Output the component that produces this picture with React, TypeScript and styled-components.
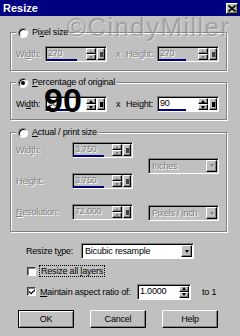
import * as React from 'react'
import styled, { createGlobalStyle, css } from 'styled-components'

const GlobalStyle = createGlobalStyle`
    * {
        box-sizing: border-box;
    }
    html,
    body {
        margin: 0;
        padding: 0;
        background: #c0c0c0;
    }
    body {
        font-family: 'Liberation Sans', Arial, sans-serif;
        font-size: 9px;
        letter-spacing: -0.2px;
        color: #000;
    }
`

const raised = css`
    background: #c0c0c0;
    border: 1px solid;
    border-color: #fff #000 #000 #fff;
    box-shadow: inset -1px -1px 0 #808080;
`

const sunken = css`
    border: 1px solid;
    border-color: #808080 #fff #fff #808080;
    box-shadow: inset 1px 1px 0 #000;
`

const etched = css`
    color: #808080;
    text-shadow: 1px 1px 0 #fff;
`

type SpinFieldProps = {
    value: string
    width: number
    disabled?: boolean
    bar?: number
    square?: boolean
    children?: React.ReactNode
}

const SpinField = ({ value, width, disabled, bar, square = true, children }: SpinFieldProps) => (
    <FieldBox $w={width} $disabled={disabled}>
        <ValueArea $disabled={disabled}>
            <ValueText>{value}</ValueText>
            {bar !== undefined && <Bar $pct={bar} />}
        </ValueArea>
        <Spinner>
            <SpinButton>
                <Arrow $dir="up" $disabled={disabled} />
            </SpinButton>
            <SpinButton>
                <Arrow $dir="down" $disabled={disabled} />
            </SpinButton>
        </Spinner>
        {square && (
            <SquareButton>
                <SquareMark $disabled={disabled} />
            </SquareButton>
        )}
        {children}
    </FieldBox>
)

const Dropdown = ({ text, width, disabled }: { text: string; width: number; disabled?: boolean }) => (
    <Select $w={width} $disabled={disabled}>
        <SelectText $disabled={disabled}>{text}</SelectText>
        <ArrowButton>
            <Arrow $dir="down" $disabled={disabled} />
        </ArrowButton>
    </Select>
)

export default function App() {
    return (
        <>
            <GlobalStyle />
            <Window>
                <TitleBar>
                    <Title>Resize</Title>
                    <CloseButton>
                        <svg width="8" height="7" viewBox="0 0 8 7">
                            <path d="M0.5 0.5 L7.5 6.5 M7.5 0.5 L0.5 6.5" stroke="#000" strokeWidth="1.6" />
                        </svg>
                    </CloseButton>
                </TitleBar>
                <Body>
                    <Watermark>©CindyMiller</Watermark>

                    <Group $pad="8px 5px 8px" $top={0}>
                        <Legend>
                            <Radio />
                            <LegendText>
                                Pi<Key>x</Key>el size
                            </LegendText>
                        </Legend>
                        <PairRow>
                            <FieldLabel $w={29} $disabled>
                                Wi<Key>d</Key>th:
                            </FieldLabel>
                            <SpinField value="270" width={62} disabled bar={76} />
                            <Times $disabled>x</Times>
                            <FieldLabel $w={31} $disabled>
                                Hei<Key>g</Key>ht:
                            </FieldLabel>
                            <SpinField value="270" width={62} disabled bar={70} />
                        </PairRow>
                    </Group>

                    <Group $pad="8px 5px 7px" $top={6}>
                        <Legend>
                            <Radio $checked />
                            <LegendText>
                                <Key>P</Key>ercentage of original
                            </LegendText>
                        </Legend>
                        <PairRow>
                            <FieldLabel $w={29}>
                                Wi<Key>d</Key>th:
                            </FieldLabel>
                            <SpinField value="90" width={62} bar={70}>
                                <BigNumber>90</BigNumber>
                            </SpinField>
                            <Times>x</Times>
                            <FieldLabel $w={31}>
                                Hei<Key>g</Key>ht:
                            </FieldLabel>
                            <SpinField value="90" width={62} bar={70} />
                        </PairRow>
                    </Group>

                    <Group $pad="4px 5px 11px" $top={7}>
                        <Legend>
                            <Radio />
                            <LegendText>
                                <Key>A</Key>ctual / print size
                            </LegendText>
                        </Legend>
                        <SizeGrid>
                            <FieldLabel $w={56} $disabled>
                                Wid<Key>t</Key>h:
                            </FieldLabel>
                            <SpinField value="3.750" width={61} disabled bar={80} />
                            <UnitSlot $row="1 / span 2">
                                <Dropdown text="Inches" width={71} disabled />
                            </UnitSlot>
                            <FieldLabel $w={56} $disabled>
                                Hei<Key>g</Key>ht:
                            </FieldLabel>
                            <SpinField value="3.750" width={61} disabled bar={80} />
                            <FieldLabel $w={56} $disabled>
                                <Key>R</Key>esolution:
                            </FieldLabel>
                            <SpinField value="72.000" width={61} disabled bar={0} />
                            <UnitSlot $row="3" $shift={2}>
                                <Dropdown text="Pixels / inch" width={71} disabled />
                            </UnitSlot>
                        </SizeGrid>
                    </Group>

                    <TypeRow>
                        <FieldLabel $w={55}>
                            Resize t<Key>y</Key>pe:
                        </FieldLabel>
                        <Dropdown text="Bicubic resample" width={113} />
                    </TypeRow>

                    <CheckRow $top={6} $h={12}>
                        <CheckBox />
                        <CheckLabel $focus>
                            Resize all <Key>l</Key>ayers
                        </CheckLabel>
                    </CheckRow>

                    <CheckRow $top={7} $h={15}>
                        <CheckBox>
                            <svg width="7" height="7" viewBox="0 0 7 7">
                                <path d="M0 2.5 L2.5 5 L7 0.5 L7 2.5 L2.5 7 L0 4.5 Z" fill="#000" />
                            </svg>
                        </CheckBox>
                        <CheckLabel $w={97}>
                            <Key>M</Key>aintain aspect ratio of:
                        </CheckLabel>
                        <SpinField value="1.0000" width={54} square={false} />
                        <Suffix>to 1</Suffix>
                    </CheckRow>

                    <ButtonRow>
                        <PushButton $default>OK</PushButton>
                        <PushButton>Cancel</PushButton>
                        <PushButton>Help</PushButton>
                    </ButtonRow>
                </Body>
            </Window>
        </>
    )
}

const Window = styled.div`
    width: 240px;
    height: 336px;
    overflow: hidden;
    display: flex;
    flex-direction: column;
    background: #c0c0c0;
`

const TitleBar = styled.div`
    height: 16px;
    flex-shrink: 0;
    display: flex;
    align-items: center;
    justify-content: space-between;
    padding: 0 2px 0 3px;
    background: #000080;
`

const Title = styled.span`
    color: #fff;
    font-weight: bold;
    font-size: 11px;
    letter-spacing: 0;
`

const CloseButton = styled.div`
    ${raised};
    width: 12px;
    height: 11px;
    display: flex;
    align-items: center;
    justify-content: center;
`

const Body = styled.div`
    position: relative;
    flex: 1;
    display: flex;
    flex-direction: column;
    padding: 11px 13px 0 10px;
`

const Watermark = styled.div`
    position: absolute;
    left: 67px;
    top: -2px;
    font-size: 26px;
    line-height: 26px;
    letter-spacing: 1.3px;
    color: rgba(100, 100, 100, 0.42);
    text-shadow: 1px 1px 0 rgba(255, 255, 255, 0.4);
    pointer-events: none;
    white-space: nowrap;
    z-index: 2;
`

const Group = styled.fieldset<{ $pad: string; $top: number }>`
    margin: ${({ $top }) => $top}px 0 0;
    padding: ${({ $pad }) => $pad};
    min-width: 0;
    border: 1px solid #808080;
    box-shadow: 1px 1px 0 #fff, inset 1px 1px 0 #fff;
`

const Legend = styled.legend`
    display: flex;
    align-items: center;
    gap: 4px;
    height: 11px;
    margin: 0;
    padding: 0 2px;
    background: #c0c0c0;
`

const LegendText = styled.span`
    line-height: 11px;
    white-space: nowrap;
`

const Key = styled.span`
    text-decoration: underline;
`

const Radio = styled.span<{ $checked?: boolean }>`
    width: 10px;
    height: 10px;
    border-radius: 50%;
    border: 1px solid;
    border-color: #808080 #fff #fff #808080;
    box-shadow: inset 1px 1px 0 #000;
    background: #fff;
    display: flex;
    align-items: center;
    justify-content: center;
    &::after {
        content: '';
        width: 4px;
        height: 4px;
        border-radius: 50%;
        background: ${({ $checked }) => ($checked ? '#000' : 'transparent')};
    }
`

const PairRow = styled.div`
    display: flex;
    align-items: center;
    height: 16px;
`

const FieldLabel = styled.span<{ $w: number; $disabled?: boolean }>`
    width: ${({ $w }) => $w}px;
    flex-shrink: 0;
    white-space: nowrap;
    ${({ $disabled }) => $disabled && etched};
`

const Times = styled.span<{ $disabled?: boolean }>`
    width: 5px;
    margin: 0 5px 0 9px;
    ${({ $disabled }) => $disabled && etched};
`

const FieldBox = styled.div<{ $w: number; $disabled?: boolean }>`
    ${sunken};
    position: relative;
    width: ${({ $w }) => $w}px;
    height: 16px;
    flex-shrink: 0;
    display: flex;
    padding: 1px 1px 0 1px;
    background: ${({ $disabled }) => ($disabled ? '#c0c0c0' : '#fff')};
`

const ValueArea = styled.div<{ $disabled?: boolean }>`
    flex: 1;
    display: flex;
    flex-direction: column;
    ${({ $disabled }) => $disabled && etched};
`

const ValueText = styled.span`
    padding-left: 1px;
    line-height: 11px;
`

const Bar = styled.div<{ $pct: number }>`
    margin-top: auto;
    height: 2px;
    width: ${({ $pct }) => $pct}%;
    background: #000080;
`

const Spinner = styled.div`
    width: 10px;
    display: flex;
    flex-direction: column;
    padding-bottom: 1px;
`

const SpinButton = styled.div`
    ${raised};
    flex: 1;
    display: flex;
    align-items: center;
    justify-content: center;
`

const Arrow = styled.span<{ $dir: 'up' | 'down'; $disabled?: boolean }>`
    width: 0;
    height: 0;
    border-left: 2.5px solid transparent;
    border-right: 2.5px solid transparent;
    ${({ $dir, $disabled }) =>
        $dir === 'up'
            ? css`
                  border-bottom: 3px solid ${$disabled ? '#808080' : '#000'};
              `
            : css`
                  border-top: 3px solid ${$disabled ? '#808080' : '#000'};
              `}
`

const SquareButton = styled.div`
    ${raised};
    width: 8px;
    margin: 0 0 1px 1px;
    display: flex;
    align-items: center;
    justify-content: center;
`

const SquareMark = styled.span<{ $disabled?: boolean }>`
    width: 3px;
    height: 5px;
    background: ${({ $disabled }) => ($disabled ? '#404040' : '#000')};
`

const BigNumber = styled.span`
    position: absolute;
    left: -2px;
    top: -14px;
    font-family: 'Liberation Sans', Arial, sans-serif;
    font-weight: bold;
    font-size: 34px;
    line-height: 34px;
    letter-spacing: 0;
    color: #000;
    pointer-events: none;
`

const SizeGrid = styled.div`
    display: grid;
    grid-template-columns: 56px 61px 86px;
    grid-template-rows: repeat(3, 16px);
    row-gap: 15px;
    align-items: center;
`

const UnitSlot = styled.div<{ $row: string; $shift?: number }>`
    grid-column: 3;
    grid-row: ${({ $row }) => $row};
    justify-self: end;
    align-self: center;
    margin-top: ${({ $shift }) => $shift || 0}px;
`

const Select = styled.div<{ $w: number; $disabled?: boolean }>`
    ${sunken};
    width: ${({ $w }) => $w}px;
    height: 16px;
    display: flex;
    align-items: stretch;
    padding: 1px 1px 1px 3px;
    background: ${({ $disabled }) => ($disabled ? '#c0c0c0' : '#fff')};
`

const SelectText = styled.span<{ $disabled?: boolean }>`
    flex: 1;
    line-height: 12px;
    white-space: nowrap;
    ${({ $disabled }) => $disabled && etched};
`

const ArrowButton = styled.div`
    ${raised};
    width: 11px;
    display: flex;
    align-items: center;
    justify-content: center;
`

const TypeRow = styled.div`
    display: flex;
    align-items: center;
    height: 16px;
    margin-top: 11px;
    padding-left: 16px;
`

const CheckRow = styled.div<{ $top: number; $h: number }>`
    display: flex;
    align-items: center;
    height: ${({ $h }) => $h}px;
    margin-top: ${({ $top }) => $top}px;
    padding-left: 17px;
`

const CheckBox = styled.span`
    width: 9px;
    height: 9px;
    flex-shrink: 0;
    margin-right: 4px;
    border: 1px solid;
    border-color: #404040 #fff #fff #404040;
    box-shadow: inset 1px 1px 0 #808080;
    background: #fff;
    display: flex;
    align-items: center;
    justify-content: center;
    svg {
        margin-left: 1px;
    }
`

const CheckLabel = styled.span<{ $w?: number; $focus?: boolean }>`
    white-space: nowrap;
    line-height: 10px;
    ${({ $w }) =>
        $w &&
        css`
            width: ${$w}px;
        `};
    ${({ $focus }) =>
        $focus &&
        css`
            outline: 1px dotted #000;
            outline-offset: 0;
            padding: 0 1px;
        `};
`

const Suffix = styled.span`
    margin-left: 11px;
`

const ButtonRow = styled.div`
    display: flex;
    gap: 16px;
    margin-top: 11px;
    padding-left: 8px;
`

const PushButton = styled.div<{ $default?: boolean }>`
    ${raised};
    width: 56px;
    height: 18px;
    display: flex;
    align-items: center;
    justify-content: center;
    ${({ $default }) =>
        $default &&
        css`
            outline: 1px solid #000;
            outline-offset: -1px;
            border-color: #000;
            box-shadow: inset 1px 1px 0 #fff, inset -1px -1px 0 #808080;
        `};
`
